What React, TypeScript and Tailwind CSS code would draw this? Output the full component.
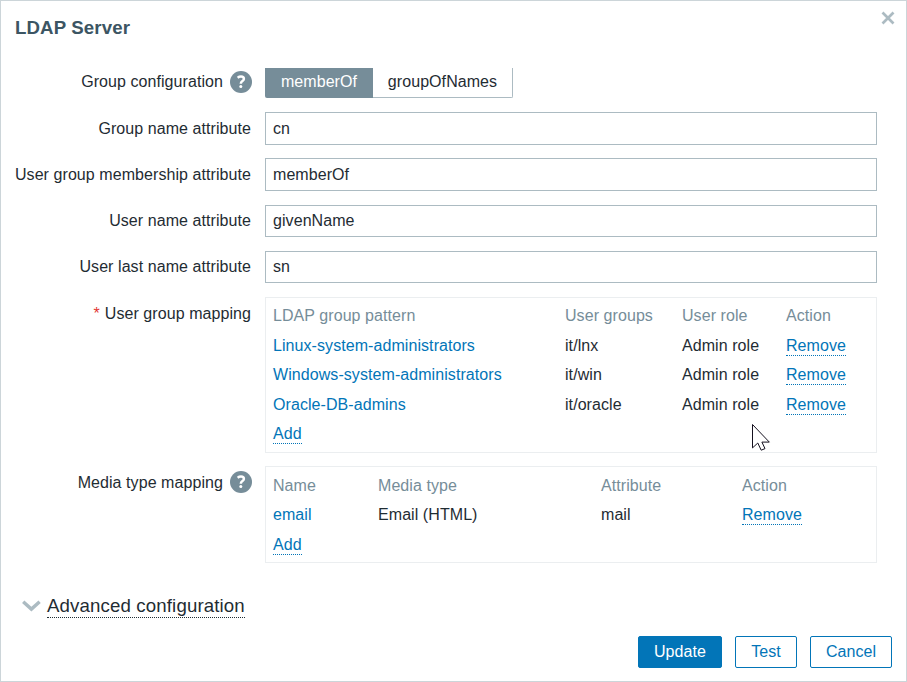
import type { ReactNode } from "react";

function Label({ children, pad }: { children: ReactNode; pad: string }) {
  return (
    <div className={`flex w-[251px] shrink-0 items-start justify-end whitespace-nowrap ${pad}`}>
      {children}
    </div>
  );
}

function HelpIcon({ offset }: { offset: string }) {
  return (
    <svg className={`ml-[7px] block h-[22px] w-[22px] ${offset}`} viewBox="0 0 22 22" fill="none">
      <circle cx="11" cy="11" r="11" fill="#768d99" />
      <path d="M7.6 6.7C8.6 6 9.7 5.6 11 5.6c1.8 0 2.9.9 2.9 2.4 0 2.2-3.1 2.1-3.1 4.8" stroke="#fff" strokeWidth="2.5" />
      <circle cx="10.8" cy="15.6" r="1.5" fill="#fff" />
    </svg>
  );
}

function LinkAction({ children }: { children: ReactNode }) {
  return (
    <a className="border-b border-dotted border-[#0275b8] pb-px text-[#0275b8]">{children}</a>
  );
}

type FieldProps = { label: string; value: string; height: string; gap: string; pad: string; inset: string };

function Field({ label, value, height, gap, pad, inset }: FieldProps) {
  return (
    <div className={`flex ${gap}`}>
      <Label pad={`pr-px ${pad}`}>{label}</Label>
      <div className={`ml-[13px] w-[612px] border border-[#acbbc2] pl-[7px] ${inset} ${height}`}>{value}</div>
    </div>
  );
}

const groups = [
  { name: "Linux-system-administrators", group: "it/lnx", height: "h-[29px]" },
  { name: "Windows-system-administrators", group: "it/win", height: "h-[30px]" },
  { name: "Oracle-DB-admins", group: "it/oracle", height: "h-[29px]" },
];

export default function App() {
  return (
    <div className="relative flex h-[682px] w-[907px] flex-col border border-[#ccd5d9] bg-white font-['Liberation_Sans',Arial,sans-serif] text-[16px] leading-[18px] tracking-[0.07px] text-[#1f2c33]">
      <header className="flex h-[67px] justify-between pt-[16px] pl-[14px]">
        <h1 className="text-[18.67px] leading-[22px] font-bold tracking-[0.12px] text-[#3c5563]">LDAP Server</h1>
        <svg className="mt-[-6px] mr-[11px] h-[14px] w-[14px]" viewBox="0 0 14 14" fill="none">
          <path d="M1.5 1.5l11 11M12.5 1.5l-11 11" stroke="#acbbc2" strokeWidth="2.7" />
        </svg>
      </header>

      <div className="flex h-[44px]">
        <Label pad="pt-[5px]">
          Group configuration
          <HelpIcon offset="-my-[2px]" />
        </Label>
        <div className="ml-[13px] flex h-[30px]">
          <div className="w-[108px] rounded-bl-[2px] bg-[#768d99] pt-[5px] text-center text-white">memberOf</div>
          <div className="w-[140px] rounded-br-[2px] border-r border-b border-[#acbbc2] pt-[5px] text-center">groupOfNames</div>
        </div>
      </div>

      <Field label="Group name attribute" value="cn" height="h-[33px]" gap="h-[46px]" pad="pt-[8px]" inset="pt-[7px]" />
      <Field label="User group membership attribute" value="memberOf" height="h-[33px]" gap="h-[47px]" pad="pt-[8px]" inset="pt-[7px]" />
      <Field label="User name attribute" value="givenName" height="h-[32px]" gap="h-[46px]" pad="pt-[7px]" inset="pt-[6px]" />
      <Field label="User last name attribute" value="sn" height="h-[32px]" gap="h-[46px]" pad="pt-[7px]" inset="pt-[6px]" />

      <div className="flex h-[169px]">
        <Label pad="pt-[8px] pr-px">
          <span className="mr-[5px] text-[#e33734]">*</span>User group mapping
        </Label>
        <div className="ml-[13px] h-[156px] w-[612px] border border-[#ebeef0] pt-[9px] pl-[7px]">
          <div className="grid h-[30px] grid-cols-[292px_117px_104px_1fr] text-[#768d99]">
            <div>LDAP group pattern</div>
            <div>User groups</div>
            <div>User role</div>
            <div>Action</div>
          </div>
          {groups.map((g) => (
            <div key={g.name} className={`grid grid-cols-[292px_117px_104px_1fr] ${g.height}`}>
              <div className="text-[#0275b8]">{g.name}</div>
              <div>{g.group}</div>
              <div>Admin role</div>
              <div><LinkAction>Remove</LinkAction></div>
            </div>
          ))}
          <LinkAction>Add</LinkAction>
        </div>
      </div>

      <div className="flex h-[130px]">
        <Label pad="pt-[8px]">
          Media type mapping
          <HelpIcon offset="-mt-[3px]" />
        </Label>
        <div className="ml-[13px] h-[97px] w-[612px] border border-[#ebeef0] pt-[10px] pl-[7px]">
          <div className="grid h-[29px] grid-cols-[105px_223px_141px_1fr] text-[#768d99]">
            <div>Name</div>
            <div>Media type</div>
            <div>Attribute</div>
            <div>Action</div>
          </div>
          <div className="grid h-[30px] grid-cols-[105px_223px_141px_1fr]">
            <div className="text-[#0275b8]">email</div>
            <div>Email (HTML)</div>
            <div>mail</div>
            <div><LinkAction>Remove</LinkAction></div>
          </div>
          <LinkAction>Add</LinkAction>
        </div>
      </div>

      <div className="flex h-[40px] pl-[21px] text-[18.67px] leading-[20px] tracking-[0.13px]">
        <svg className="mt-[4px] h-[12px] w-[19px]" viewBox="0 0 19 12" fill="none">
          <path d="M1.2 1.7l8.2 7.4 8.2-7.4" stroke="#acbbc2" strokeWidth="3.4" />
        </svg>
        <div className="ml-[6px]"><span className="border-b border-dotted border-[#1f2c33] pb-px">Advanced configuration</span></div>
      </div>

      <footer className="flex justify-end gap-[13px] pr-[14px] text-center text-[#0275b8]">
        <button className="h-[32px] w-[84px] rounded-[2px] border border-[#0275b8] bg-[#0275b8] pb-px text-white">Update</button>
        <button className="h-[32px] w-[62px] rounded-[2px] border border-[#0275b8] pb-px">Test</button>
        <button className="h-[32px] w-[82px] rounded-[2px] border border-[#0275b8] pb-px">Cancel</button>
      </footer>

      <svg className="absolute top-[423px] left-[751px] h-[28px] w-[19px]" viewBox="0 0 19 28">
        <path d="M.5.5v23.4l5.3-4.9 3.4 7.2 3.8-1.6-3.1-6.5h7.4z" fill="#fff" stroke="#15111f" strokeWidth="1" />
      </svg>
    </div>
  );
}
